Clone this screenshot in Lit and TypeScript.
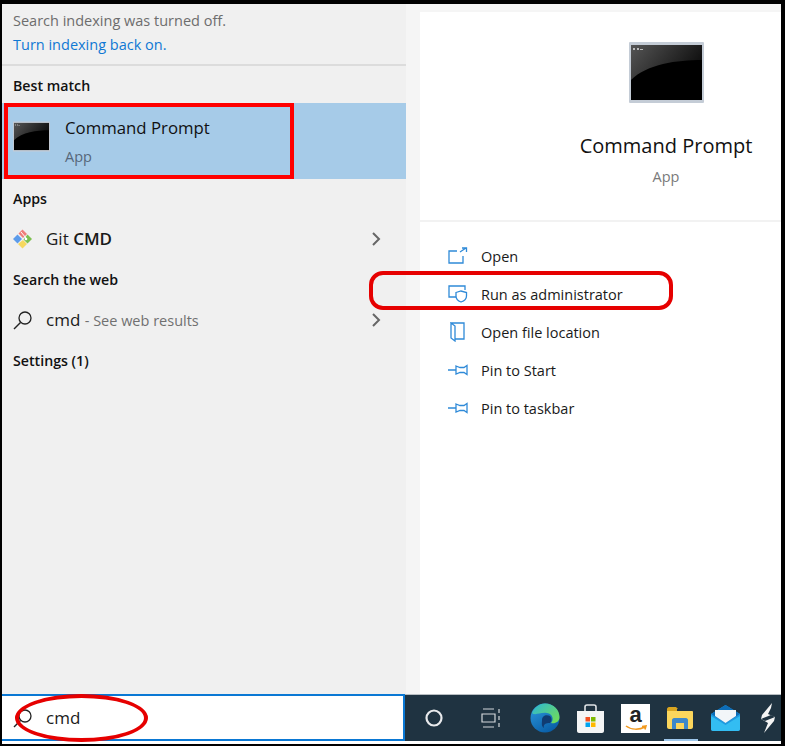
import { LitElement, html, css, svg } from "lit";
import { customElement } from "lit/decorators.js";

const cmdIcon = (w: number, h: number) => html`
  <svg width=${w} height=${h} viewBox="0 0 75 61">
    <defs>
      <linearGradient id="cmdtop" x1="0" y1="0" x2="1" y2="0.4">
        <stop offset="0" stop-color="#555" />
        <stop offset="1" stop-color="#111" />
      </linearGradient>
    </defs>
    <rect x="0" y="0" width="75" height="61" rx="1" fill="#c4ccd6" />
    <rect x="2" y="3" width="71" height="55" fill="#000" />
    <path d="M2 3H73V18C48 18 18 22 2 38Z" fill="url(#cmdtop)" />
    <path d="M4 6h2v2H4zM8 6h2v2H8zM11 7h3v1h-3z" fill="#bbb" />
  </svg>
`;

const gitIcon = svg`
  <path d="M9.5 0.5 14 5 10 9 5.5 4.5Z" fill="#ef7f7a" />
  <path d="M14.5 5.5 19 10 14.5 14.5 10.5 10.5Z" fill="#7cc04f" />
  <path d="M10 11 14 15 9.5 19.5 5 15Z" fill="#f6d85e" />
  <path d="M4.500 5.500 9 10 4.500 14.500 0 10Z" fill="#5c9bea" />
  <circle cx="13" cy="10" r="1.300" fill="#fff" />
  <path d="M8 3 13 9" stroke="#fff" stroke-width="1" />
`;

const chevron = html`
  <svg class="chev" width="10" height="14" viewBox="0 0 10 14">
    <path d="M2 1 8 7 2 13" fill="none" stroke="#666" stroke-width="2" />
  </svg>
`;

const searchIcon = (color: string) => html`
  <svg width="20" height="20" viewBox="0 0 20 20">
    <circle cx="12" cy="8" r="6" fill="none" stroke=${color} stroke-width="1.300" />
    <path d="M7.500 12.500 1 19" stroke=${color} stroke-width="1.500" fill="none" />
  </svg>
`;

const pinIcon = html`
  <svg width="20" height="14" viewBox="0 0 20 14">
    <path d="M0 7H8M8 3 12 4.500H16L19 2.500V11.500L16 9.500H12L8 11Z" fill="none" stroke="#2f8ad8" stroke-width="1.300" />
  </svg>
`;

const actions = [
  {
    label: "Open",
    icon: html`<svg width="20" height="18" viewBox="0 0 20 18">
      <path d="M9 4H1V16H15V9M12 5 18 1M14 1H18.500V5" fill="none" stroke="#2f8ad8" stroke-width="1.300" />
    </svg>`,
  },
  {
    label: "Run as administrator",
    icon: html`<svg width="20" height="18" viewBox="0 0 20 18">
      <path d="M8 12H1V1H17V5" fill="none" stroke="#2f8ad8" stroke-width="1.300" />
      <path d="M8 7.500 13 6 18.500 7.500V11C18.500 14 16 16 13 17 10 16 8 14 8 11Z" fill="none" stroke="#2f8ad8" stroke-width="1.300" />
    </svg>`,
  },
  {
    label: "Open file location",
    icon: html`<svg class="file" width="16" height="20" viewBox="0 0 16 20">
      <path d="M1 1V16L5 19V17H14V1H1L5 4V17" fill="none" stroke="#2f8ad8" stroke-width="1.300" />
    </svg>`,
  },
  { label: "Pin to Start", icon: pinIcon },
  { label: "Pin to taskbar", icon: pinIcon },
];

@customElement("app-root")
export class AppRoot extends LitElement {
  static styles = css`
    :host {
      display: block;
      position: relative;
      width: 785px;
      height: 746px;
      box-sizing: border-box;
      padding: 4px 4px 2px 2px;
      background: #000;
      font-family: "Open Sans", "Noto Sans", sans-serif;
      color: #1a1a1a;
      overflow: hidden;
    }

    .frame {
      display: flex;
      flex-direction: column;
      height: 100%;
      background: #fff;
    }

    .panes {
      display: flex;
      height: 690px;
    }

    /* lista de resultados */
    .results {
      width: 404px;
      background: #f0f0f0;
      display: flex;
      flex-direction: column;
    }

    .notice {
      height: 62px;
      box-sizing: border-box;
      padding: 5px 11px 0;
      border-bottom: 2px solid #dcdcdc;
      font-size: 14.5px;
      line-height: 24px;
      color: #6d6d6d;
    }

    .notice a {
      display: block;
      color: #0f78d4;
    }

    .heading {
      height: 38px;
      box-sizing: border-box;
      padding: 1px 0 0 11px;
      display: flex;
      align-items: center;
      font-size: 14.2px;
      font-weight: 600;
      color: #111;
    }

    .best-heading {
      height: 37px;
    }

    .best {
      height: 76px;
      background: #a6cbe8;
      display: flex;
      align-items: center;
      padding-left: 11px;
      gap: 15px;
    }

    .best svg {
      margin-bottom: 9px;
    }

    .best-text {
      padding-top: 2px;
    }

    .best-name {
      font-size: 16.8px;
      line-height: 22px;
      color: #111;
    }

    .best-kind {
      margin-top: 8px;
      font-size: 14.5px;
      line-height: 20px;
      color: #56677a;
    }

    .row {
      height: 43px;
      display: flex;
      align-items: center;
      padding-left: 11px;
      position: relative;
      font-size: 17px;
    }

    .row-icon {
      width: 33px;
      display: flex;
    }

    .row b {
      font-weight: 600;
    }

    .row small {
      font-size: 14.5px;
      color: #707070;
    }

    .chev {
      position: absolute;
      left: 369px;
      top: 15px;
    }

    .gutter {
      width: 14px;
      background: #f5f5f5;
    }

    /* painel de detalhes */
    .detail {
      flex: 1;
      display: flex;
      flex-direction: column;
    }

    .strip {
      height: 8px;
      background: #f5f5f5;
    }

    .hero {
      height: 210px;
      box-sizing: border-box;
      padding: 30px 0 0 131px;
      border-bottom: 2px solid #f2f2f2;
      display: flex;
      flex-direction: column;
      align-items: center;
    }

    .hero-name {
      margin-top: 29px;
      font-size: 20px;
      line-height: 28px;
      color: #111;
    }

    .hero-kind {
      margin-top: 7px;
      font-size: 14.5px;
      line-height: 20px;
      color: #7a7a7a;
    }

    .actions {
      padding-top: 15px;
    }

    .action {
      height: 38px;
      display: flex;
      align-items: center;
      padding-left: 28px;
      font-size: 14.5px;
      color: #1a1a1a;
    }

    .action-icon {
      width: 33px;
      display: flex;
    }

    .action-icon .file {
      margin-left: 2px;
    }

    /* barra de tarefas */
    .bar {
      display: flex;
      height: 47px;
    }

    .search {
      width: 403px;
      box-sizing: border-box;
      border: 2px solid #0a78d4;
      border-left: 0;
      background: #fff;
      display: flex;
      align-items: center;
      padding-left: 11px;
      gap: 13px;
      font-size: 17px;
    }

    .tasks {
      flex: 1;
      background: #1f3341;
      border-top: 1px solid #b8bec2;
      display: grid;
      grid-template-columns: 57px 56px 54px 36px 55px 34px 57px 1fr;
      align-items: center;
      justify-items: center;
      position: relative;
    }

    .taskview {
      margin-left: 2px;
    }

    .amazon {
      width: 29px;
      height: 29px;
      background: #fff;
      color: #222;
      display: flex;
      flex-direction: column;
      align-items: center;
      font: 700 22px/21px "Liberation Sans", sans-serif;
    }

    .active {
      position: absolute;
      left: 259px;
      bottom: 0;
      width: 34px;
      height: 2px;
      background: #9fc8ec;
    }

    /* marcacoes em vermelho */
    .mark {
      position: absolute;
      box-sizing: border-box;
      border: 4px solid #f00;
      pointer-events: none;
    }

    .mark-best {
      left: 4px;
      top: 103px;
      width: 290px;
      height: 76px;
    }

    .mark-run {
      left: 369px;
      top: 271px;
      width: 304px;
      height: 39px;
      border-radius: 14px;
      border-color: #e60000;
    }

    .mark-cmd {
      left: 15px;
      top: 694px;
      width: 133px;
      height: 48px;
      border-radius: 50%;
      border-color: #e60000;
    }
  `;

  render() {
    return html`
      <div class="frame">
        <div class="panes">
          <section class="results">
            <div class="notice">
              Search indexing was turned off.
              <a>Turn indexing back on.</a>
            </div>
            <div class="heading best-heading">Best match</div>
            <div class="best">
              ${cmdIcon(37, 31)}
              <div class="best-text">
                <div class="best-name">Command Prompt</div>
                <div class="best-kind">App</div>
              </div>
            </div>
            <div class="heading">Apps</div>
            <div class="row">
              <span class="row-icon"><svg width="20" height="20" viewBox="0 0 20 20">${gitIcon}</svg></span>
              <span>Git <b>CMD</b></span>
              ${chevron}
            </div>
            <div class="heading">Search the web</div>
            <div class="row">
              <span class="row-icon">${searchIcon("#222")}</span>
              <span>cmd <small>- See web results</small></span>
              ${chevron}
            </div>
            <div class="heading">Settings (1)</div>
          </section>
          <div class="gutter"></div>
          <section class="detail">
            <div class="strip"></div>
            <div class="hero">
              ${cmdIcon(75, 61)}
              <div class="hero-name">Command Prompt</div>
              <div class="hero-kind">App</div>
            </div>
            <div class="actions">
              ${actions.map(
                (a) => html`
                  <div class="action">
                    <span class="action-icon">${a.icon}</span>
                    <span>${a.label}</span>
                  </div>
                `
              )}
            </div>
          </section>
        </div>
        <div class="bar">
          <div class="search">
            ${searchIcon("#222")}
            <span>cmd</span>
          </div>
          <div class="tasks">
            <svg width="18" height="18" viewBox="0 0 18 18">
              <circle cx="9" cy="9" r="7.500" fill="none" stroke="#e8eaec" stroke-width="2.200" />
            </svg>
            <svg class="taskview" width="20" height="20" viewBox="0 0 20 20" fill="none" stroke="#d3d8db" stroke-width="1.200">
              <path d="M2 1H13M2 19H13M1 6H14V14H1ZM18 1V5M18 8V12M18 15V19" />
            </svg>
            <svg width="30" height="30" viewBox="0 0 30 30">
              <defs>
                <linearGradient id="edgeblue" x1="0" y1="0" x2="0.6" y2="1">
                  <stop offset="0" stop-color="#2f9ce0" />
                  <stop offset="1" stop-color="#0a5fa8" />
                </linearGradient>
                <linearGradient id="edgegreen" x1="0" y1="0" x2="1" y2="0.8">
                  <stop offset="0" stop-color="#2bb6d8" />
                  <stop offset="1" stop-color="#6fdc5a" />
                </linearGradient>
              </defs>
              <circle cx="15" cy="15" r="14.500" fill="url(#edgeblue)" />
              <path d="M15 .5C24 .5 29.500 7 29.500 14 29.500 19 25 21 21 20 24 17 23 11 17 10 10 9 5 13 2 10 4 5 9 .5 15 .5Z" fill="url(#edgegreen)" />
              <path d="M12 17C12 13 16 11 20 13 22 15 22 18 20 20 16 20 13 21 14 25 11 23 12 20 12 17Z" fill="#103c72" />
            </svg>
            <svg width="29" height="29" viewBox="0 0 29 29">
              <path d="M9 8V3C9 1.500 10 1 11 1H18C19 1 20 1.500 20 3V8" fill="none" stroke="#dfe3e6" stroke-width="1.600" />
              <path d="M1 7H28V27C28 28 27 29 26 29H3C2 29 1 28 1 27Z" fill="#f4f5f5" />
              <rect x="9.500" y="13" width="4.500" height="4.500" fill="#f25022" />
              <rect x="15" y="13" width="4.500" height="4.500" fill="#7fba00" />
              <rect x="9.500" y="18.500" width="4.500" height="4.500" fill="#00a4ef" />
              <rect x="15" y="18.500" width="4.500" height="4.500" fill="#ffb900" />
            </svg>
            <div class="amazon">
              a
              <svg width="22" height="6" viewBox="0 0 22 6">
                <path d="M1 1C6 5 14 5 20 2M17 1.500 21 1 20 4.500" fill="none" stroke="#f29a1f" stroke-width="1.500" />
              </svg>
            </div>
            <svg width="26" height="22" viewBox="0 0 26 22">
              <path d="M0 2C0 1 1 0 2 0H9L11 2H10V5H0Z" fill="#d9a520" />
              <path d="M0 4H25C25.500 4 26 4.500 26 5V20C26 21 25 22 24 22H2C1 22 0 21 0 20Z" fill="#fbd65c" />
              <path d="M5 22V13C5 12 6 11 7 11H19C20 11 21 12 21 13V22H17V16H9V22Z" fill="#3d88c9" />
            </svg>
            <svg width="29" height="26" viewBox="0 0 29 26">
              <path d="M0 9 14.500 0 29 9V24C29 25 28 26 27 26H2C1 26 0 25 0 24Z" fill="#1f9be0" />
              <path d="M0 9 14.500 0 29 9 14.500 18Z" fill="#0d6db8" />
              <path d="M4 5H25V11L14.500 18 4 11Z" fill="#f2f6f9" />
              <path d="M0 11 14.500 20 29 11V24C29 25 28 26 27 26H2C1 26 0 25 0 24Z" fill="#33bdf2" />
            </svg>
            <svg width="16" height="30" viewBox="0 0 16 30">
              <path d="M12 0 2 12 1 16 8 20 4 30 14 18 15 14 8 11 11 5Z" fill="#f4f4f4" />
              <path d="M1 16 11 12 15 14 5 18Z" fill="#1f3341" />
            </svg>
            <span class="active"></span>
          </div>
        </div>
      </div>
      <div class="mark mark-best"></div>
      <div class="mark mark-run"></div>
      <div class="mark mark-cmd"></div>
    `;
  }
}
